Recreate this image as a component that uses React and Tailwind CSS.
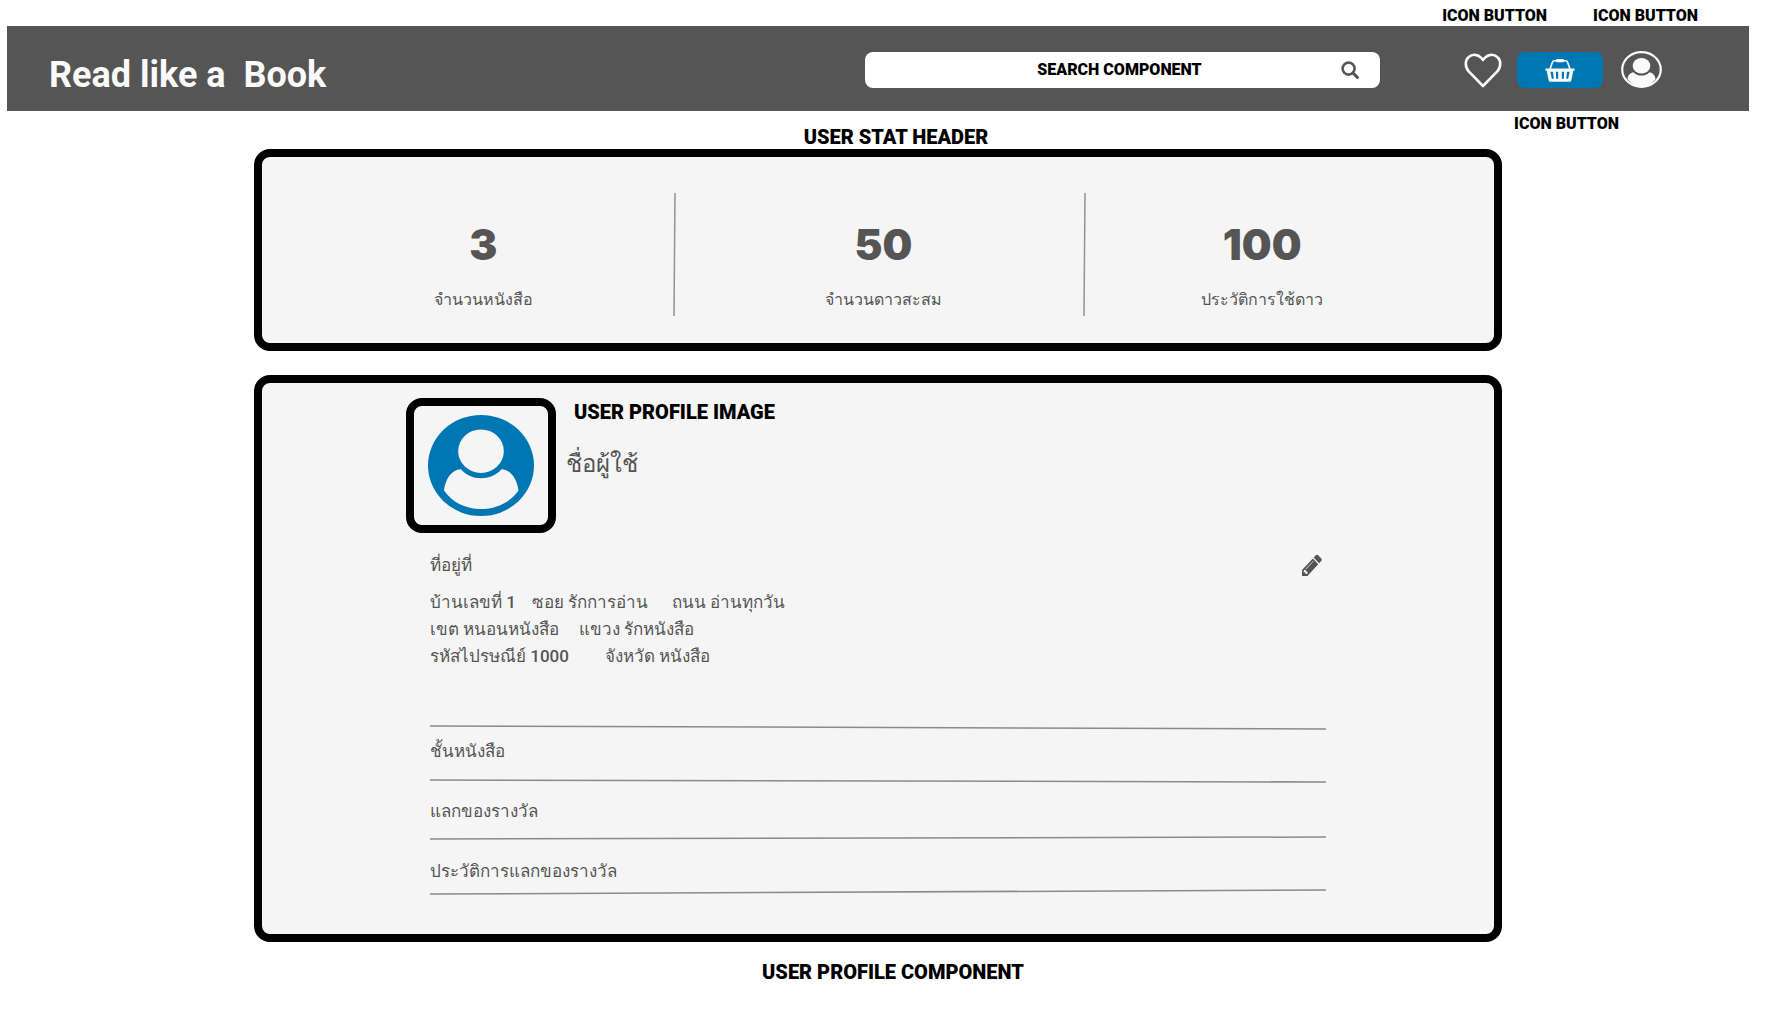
const captionSmall = "text-[16px] leading-5 font-black text-black whitespace-nowrap";
const captionLarge = "text-[20px] leading-7 font-black text-black whitespace-nowrap";

const stats = [
  { value: "3", label: "จำนวนหนังสือ", pad: "pl-8" },
  { value: "50", label: "จำนวนดาวสะสม", pad: "pl-2" },
  { value: "100", label: "ประวัติการใช้ดาว", pad: "pr-14" },
];

const menu = [
  { label: "ชั้นหนังสือ", box: "pt-[6px] h-12", y1: 1, y2: 3 },
  { label: "แลกของรางวัล", box: "pt-[12px] h-[51px]", y1: 3, y2: 1 },
  { label: "ประวัติการแลกของรางวัล", box: "pt-[15px] h-[47px]", y1: 5, y2: 1 },
];

function HeartIcon() {
  return (
    <svg viewBox="0 0 38 36" className="h-9 w-[38px]" fill="none" stroke="#fafafa" strokeWidth="2.6" strokeLinejoin="round" aria-hidden="true">
      <path d="M19 34 L4.7 19.3 C0.8 15 0.9 8.5 4.5 5.2 C8.3 1.7 14 2.2 17.2 5.8 L19 8 L20.8 5.8 C24 2.2 29.7 1.7 33.5 5.2 C37.1 8.5 37.2 15 33.3 19.3 Z" />
    </svg>
  );
}

function BasketIcon() {
  return (
    <svg viewBox="0 0 30 24" className="h-6 w-[30px]" fill="none" aria-hidden="true">
      <path d="M5 11 L7.3 4.5 Q7.8 2.8 9.8 2.8 H20.2 Q22.2 2.8 22.7 4.5 L25 11" stroke="#fafafa" strokeWidth="1.6" />
      <rect x="11" y="1" width="8" height="3.2" rx="1.2" fill="#fafafa" />
      <path
        fill="#fafafa"
        fillRule="evenodd"
        d="M0.5 10.4 H29.5 V12.8 H28.3 L26.2 23 Q26 23.8 25 23.8 H5 Q4 23.8 3.8 23 L1.7 12.8 H0.5 Z M5.4 13.8 L6.8 20.8 H8.8 L8 13.8 Z M10.8 13.8 L11.2 20.8 H13.2 V13.8 Z M16.8 13.8 V20.8 H18.8 L19.2 13.8 Z M22 13.8 L21.2 20.8 H23.2 L24.6 13.8 Z"
      />
    </svg>
  );
}

function AccountIcon() {
  return (
    <svg viewBox="0 0 41 37" className="h-[37px] w-[41px]" fill="none" aria-hidden="true">
      <ellipse cx="20.5" cy="18.5" rx="19.3" ry="17.3" stroke="#fafafa" strokeWidth="2.2" />
      <ellipse cx="20.5" cy="14.8" rx="8.8" ry="7.8" fill="#fafafa" />
      <path d="M6.5 28 C7 24 9.5 21.5 12.5 21.2 C14.5 23.5 17.3 24.6 20.5 24.6 C23.7 24.6 26.5 23.5 28.5 21.2 C31.5 21.5 34 24 34.5 28 C31 33 26 35.8 20.5 35.8 C15 35.8 10 33 6.5 28 Z" fill="#fafafa" />
    </svg>
  );
}

function ProfilePicture() {
  return (
    <svg viewBox="0 0 106 101" className="h-[101px] w-[106px]" role="img" aria-label="User profile">
      <ellipse cx="53" cy="50.5" rx="53" ry="50.5" fill="#0077b3" />
      <ellipse cx="53" cy="36.2" rx="22.8" ry="21.8" fill="#f5f5f5" />
      <path d="M16 75.5 C17.5 64 23 54.8 33 54.2 C38.5 60.3 45 63.2 53 63.2 C61 63.2 68 60.3 73.5 54.2 C83 54.8 89 64 90.5 75.5 C82 87.5 68.5 94 53 94 C37.5 94 24.5 87.5 16 75.5 Z" fill="#f5f5f5" />
    </svg>
  );
}

function PencilIcon() {
  return (
    <svg viewBox="0 100 1536 1570" preserveAspectRatio="none" className="h-[22px] w-5" fill="#555555" aria-hidden="true">
      <path d="M363 1536l91-91-235-235-91 91v107h128v128h107zm523-928q0-22-22-22-10 0-17 7l-542 542q-7 7-7 17 0 22 22 22 10 0 17-7l542-542q7-7 7-17zm-54-192l416 416-832 832h-416v-416zm683 96q0 53-37 90l-166 166-416-416 166-165q36-38 90-38 53 0 91 38l235 234q37 39 37 91z" />
    </svg>
  );
}

function SearchIcon() {
  return (
    <svg viewBox="0 0 18 18" className="h-[18px] w-[18px]" fill="none" stroke="#555555" aria-hidden="true">
      <circle cx="7.6" cy="7.6" r="6" strokeWidth="2.6" />
      <path d="M12 12 L16.4 16.4" strokeWidth="3" strokeLinecap="round" />
    </svg>
  );
}

function Rule({ y1, y2 }) {
  return (
    <svg viewBox="0 0 100 6" preserveAspectRatio="none" className="block h-[6px] w-full" aria-hidden="true">
      <line x1="0" y1={y1} x2="100" y2={y2} stroke="#8a8a8a" strokeWidth="1.5" vectorEffect="non-scaling-stroke" />
    </svg>
  );
}

function Divider() {
  return (
    <svg viewBox="0 0 3 123" className="h-[123px] w-[3px]" aria-hidden="true">
      <line x1="2" y1="0" x2="1" y2="123" stroke="#929292" strokeWidth="1.5" />
    </svg>
  );
}

export default function App() {
  return (
    <div className="min-h-screen bg-white pl-[7px] pr-[35px] font-[Roboto,'Noto_Sans',sans-serif] text-[#555555]">
      <div className="flex h-[26px] items-center justify-end gap-[46px] pt-[6px] pr-[51px]">
        <span className={captionSmall}>ICON BUTTON</span>
        <span className={captionSmall}>ICON BUTTON</span>
      </div>

      <header className="flex h-[85px] items-center bg-[#555555] pt-[2px] pr-[87px] pl-[42px]">
        <h1 className="flex-1 pt-[10px] text-[36px] leading-10 font-bold whitespace-pre text-[#fafafa]">Read like a  Book</h1>
        <form className="flex h-9 w-[515px] items-center rounded-lg bg-white pr-[21px] pl-12" onSubmit={(e) => e.preventDefault()}>
          <input
            type="search"
            aria-label="Search"
            placeholder="SEARCH COMPONENT"
            className="h-full min-w-0 flex-1 bg-transparent text-center text-[16px] font-black text-black outline-none placeholder:text-black placeholder:opacity-100"
          />
          <button type="submit" aria-label="Submit search">
            <SearchIcon />
          </button>
        </form>
        <div className="ml-[84px] flex items-center">
          <button type="button" aria-label="Favourites">
            <HeartIcon />
          </button>
          <button type="button" aria-label="Basket" className="ml-[15px] flex h-9 w-[86px] items-center justify-center rounded-lg bg-[#0077b3]">
            <BasketIcon />
          </button>
          <button type="button" aria-label="Account" className="ml-[18px]">
            <AccountIcon />
          </button>
        </div>
      </header>

      <div className="grid h-[38px] grid-cols-[1fr_auto_1fr] pl-9">
        <span className={`${captionLarge} col-start-2 mt-3`}>USER STAT HEADER</span>
        <span className={`${captionSmall} mt-[3px] mr-[130px] justify-self-end`}>ICON BUTTON</span>
      </div>

      <main className="mx-[247px]">
        <section className="flex rounded-2xl border-8 border-black bg-[#f5f5f5] pt-9 pb-[27px]">
          {stats.map((s, i) => (
            <div key={s.label} className="flex flex-1">
              {i > 0 && <Divider />}
              <div className={`flex flex-1 flex-col items-center pt-6 ${s.pad}`}>
                <span className="font-[Inter,sans-serif] text-[42px] leading-[56px] font-black">{s.value}</span>
                <span className="mt-[13px] text-[16px] leading-7 font-medium whitespace-nowrap">{s.label}</span>
              </div>
            </div>
          ))}
        </section>

        <section className="mt-6 rounded-2xl border-8 border-black bg-[#f5f5f5] px-[168px] pt-[15px] pb-[39px]">
          <div className="-ml-6 flex">
            <div className="flex h-[135px] w-[150px] items-center justify-center rounded-2xl border-8 border-black">
              <ProfilePicture />
            </div>
            <div className="ml-[10px]">
              <p className={`${captionLarge} pl-2`}>USER PROFILE IMAGE</p>
              <h2 className="mt-[18px] text-[24px] leading-10">ชื่อผู้ใช้</h2>
            </div>
          </div>

          <div className="mt-[18px] flex items-center justify-between">
            <h3 className="text-[17px] leading-7">ที่อยู่ที่</h3>
            <button type="button" aria-label="Edit address" className="mr-1">
              <PencilIcon />
            </button>
          </div>
          <address className="mt-[10px] text-[17px] leading-[27px] font-medium whitespace-nowrap not-italic">
            <div>
              <span>บ้านเลขที่ 1</span>
              <span className="ml-4">ซอย รักการอ่าน</span>
              <span className="ml-6">ถนน อ่านทุกวัน</span>
            </div>
            <div>
              <span>เขต หนอนหนังสือ</span>
              <span className="ml-5">แขวง รักหนังสือ</span>
            </div>
            <div>
              <span>รหัสไปรษณีย์ 1000</span>
              <span className="ml-9">จังหวัด หนังสือ</span>
            </div>
          </address>

          <nav className="mt-[55px]">
            <Rule y1={1} y2={4} />
            {menu.map((m) => (
              <div key={m.label}>
                <a href="#" className={`block text-[17px] leading-7 ${m.box}`}>
                  {m.label}
                </a>
                <Rule y1={m.y1} y2={m.y2} />
              </div>
            ))}
          </nav>
        </section>
      </main>

      <p className={`${captionLarge} mt-4 pl-[30px] text-center`}>USER PROFILE COMPONENT</p>
    </div>
  );
}
